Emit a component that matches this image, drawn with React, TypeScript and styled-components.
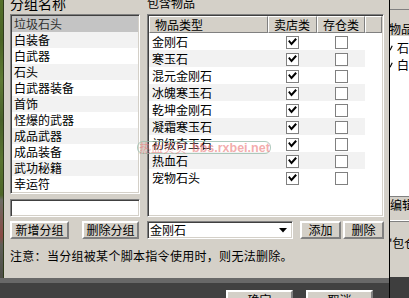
import React from "react";
import styled, { createGlobalStyle, css } from "styled-components";

const FONT = `"Noto Sans CJK SC", "Noto Sans CJK JP", "DejaVu Sans", sans-serif`;

const GlobalStyle = createGlobalStyle`
  html, body { margin: 0; padding: 0; background: #404040; }
  #root { width: 409px; height: 298px; }
`;

const Screen = styled.div`
  position: relative;
  display: flex;
  width: 409px;
  height: 298px;
  overflow: hidden;
  font-family: ${FONT};
  font-size: 12px;
  color: #000;
  background: #404040;
`;

const MainColumn = styled.div`
  display: flex;
  flex-direction: column;
  width: 389px;
  flex: none;
`;

const TopArea = styled.div`
  display: flex;
  height: 278px;
  flex: none;
`;

const GameEdge = styled.div`
  width: 4px;
  flex: none;
  box-sizing: border-box;
  border-right: 1px solid #2f3b1c;
  background: linear-gradient(
    to bottom,
    #55702c 0px,
    #4a6424 40px,
    #5e7a34 80px,
    #48612a 120px,
    #5a7430 160px,
    #4d6627 195px,
    #6c6c64 200px,
    #8a4a44 236px,
    #5e5e58 245px,
    #4e4e48 278px
  );
`;

const Panel = styled.div`
  flex: 1;
  min-width: 0;
  display: flex;
  flex-direction: column;
  background: #d4d0c8;
  padding: 0 5px 0 6px;
`;

const Columns = styled.div`
  display: flex;
  gap: 7px;
`;

const Column = styled.div<{ $width?: number }>`
  display: flex;
  flex-direction: column;
  width: ${(p) => (p.$width ? `${p.$width}px` : "auto")};
  flex: ${(p) => (p.$width ? "none" : "1")};
  min-width: 0;
`;

const GroupLabel = styled.div<{ $size: number }>`
  height: 14px;
  margin-top: -4px;
  margin-bottom: 4px;
  line-height: 14px;
  font-size: ${(p) => p.$size}px;
  white-space: nowrap;
`;

const sunken = css`
  box-sizing: border-box;
  border: 1px solid;
  border-color: #808080 #ffffff #ffffff #808080;
  padding: 1px;
  box-shadow: inset 1px 1px 0 #404040, inset -1px -1px 0 #d4d0c8;
  background: #ffffff;
`;

const raised = css`
  box-sizing: border-box;
  border: 2px solid;
  border-color: #ffffff #808080 #808080 #ffffff;
  background: #d4d0c8;
`;

const ListBox = styled.div`
  ${sunken};
  height: 180px;
  overflow: hidden;
`;

const ListRow = styled.div<{ $selected?: boolean; $odd?: boolean }>`
  height: 16px;
  line-height: 16px;
  padding-left: 2px;
  white-space: nowrap;
  background: ${(p) => (p.$selected ? "#c4c4c4" : p.$odd ? "#f2f2f2" : "#ffffff")};
  color: ${(p) => (p.$selected ? "#303030" : "#000000")};
`;

const TextInput = styled.div`
  ${sunken};
  height: 18px;
  margin-top: 5px;
`;

const ButtonRow = styled.div<{ $gap: number }>`
  display: flex;
  gap: ${(p) => p.$gap}px;
  margin-top: 4px;
  height: 18px;
`;

const Button = styled.div<{ $width: number }>`
  ${raised};
  width: ${(p) => p.$width}px;
  height: 18px;
  display: flex;
  align-items: center;
  justify-content: center;
  line-height: 14px;
  white-space: nowrap;
`;

const TableBox = styled.div`
  ${sunken};
  height: 203px;
  display: flex;
  flex-direction: column;
  overflow: hidden;
`;

const HeaderRow = styled.div`
  display: flex;
  height: 17px;
  flex: none;
`;

const HeaderCell = styled.div<{ $width?: number }>`
  box-sizing: border-box;
  ${(p) => (p.$width ? `width: ${p.$width}px; flex: none;` : "flex: 1;")}
  height: 17px;
  border: 1px solid;
  border-color: #ffffff #808080 #808080 #ffffff;
  background: #d4d0c8;
  padding-left: 5px;
  line-height: 15px;
  white-space: nowrap;
`;

const ItemRow = styled.div<{ $odd?: boolean }>`
  display: flex;
  width: 216px;
  height: 17px;
  flex: none;
  background: ${(p) => (p.$odd ? "#f2f2f2" : "#ffffff")};
`;

const ItemName = styled.div`
  width: 119px;
  flex: none;
  box-sizing: border-box;
  padding-left: 3px;
  line-height: 17px;
  white-space: nowrap;
`;

const CheckCell = styled.div<{ $width: number }>`
  width: ${(p) => p.$width}px;
  flex: none;
  display: flex;
  align-items: center;
  justify-content: center;
  padding-top: 1px;
  box-sizing: border-box;
`;

const CheckBox = styled.div`
  box-sizing: border-box;
  width: 13px;
  height: 13px;
  border: 1px solid #808080;
  background: #ffffff;
  display: flex;
`;

const SelectBox = styled.div`
  ${sunken};
  width: 146px;
  height: 18px;
  margin-right: 5px;
  display: flex;
  align-items: center;
  justify-content: space-between;
  padding: 0 5px 0 2px;
  line-height: 14px;
`;

const Notice = styled.div`
  margin-top: 9px;
  line-height: 16px;
  letter-spacing: 0.3px;
  white-space: nowrap;
`;

const BottomBar = styled.div`
  flex: 1;
  display: flex;
  justify-content: flex-end;
  gap: 13px;
  padding-right: 16px;
  border-top: 5px solid #686868;
  background: #414141;
  overflow: hidden;
`;

const DialogButton = styled.div`
  ${raised};
  width: 67px;
  height: 22px;
  margin-top: 7px;
  flex: none;
  display: flex;
  justify-content: center;
  padding-top: 1px;
  line-height: 14px;
`;

const SideColumn = styled.div`
  flex: 1;
  display: flex;
  flex-direction: column;
  box-sizing: border-box;
  border-left: 1px solid #000000;
  background: #d4d0c8;
  overflow: hidden;
`;

const SideTop = styled.div`
  height: 9px;
  border-bottom: 1px solid #808080;
  flex: none;
`;

const SideHeader = styled.div`
  margin-top: 11px;
  height: 15px;
  line-height: 15px;
  margin-left: -1px;
  white-space: nowrap;
  flex: none;
`;

const SideList = styled.div`
  height: 160px;
  flex: none;
  background: #ffffff;
  padding-top: 3px;
  box-sizing: border-box;
`;

const SideRow = styled.div`
  display: flex;
  align-items: center;
  gap: 4px;
  height: 17px;
  white-space: nowrap;
`;

const SideTab = styled.div`
  height: 26px;
  flex: none;
  box-sizing: border-box;
  border-top: 1px solid #808080;
  border-bottom: 1px solid #808080;
  box-shadow: inset 0 -1px 0 #ffffff;
  line-height: 15px;
  white-space: nowrap;
`;

const SideText = styled.div`
  margin-top: 14px;
  line-height: 14px;
  white-space: nowrap;
  margin-left: -1px;
`;

const SideDark = styled.div`
  margin-top: auto;
  height: 21px;
  flex: none;
  background: #3e3e3e;
`;

const Watermark = styled.div`
  position: absolute;
  left: 137px;
  top: 141px;
  width: 134px;
  height: 13px;
  box-sizing: border-box;
  border: 1px solid rgba(150, 185, 170, 0.75);
  border-radius: 6px;
  display: flex;
  align-items: center;
  gap: 5px;
  padding-left: 1px;
  color: rgba(235, 120, 120, 0.62);
  font-size: 12px;
  line-height: 12px;
  white-space: nowrap;
  pointer-events: none;
`;

const WatermarkUrl = styled.span`
  font-family: "Liberation Sans", Arial, sans-serif;
  font-size: 12.5px;
  font-weight: bold;
`;

const Check = () => (
  <svg width="11" height="11" viewBox="0 0 11 11">
    <polyline points="2.5,4.5 4.5,7 8.5,2.5" fill="none" stroke="#000" strokeWidth="2" strokeLinecap="square" />
  </svg>
);

const Arrow = () => (
  <svg width="8" height="5" viewBox="0 0 8 5">
    <polygon points="0,0 8,0 4,4.5" fill="#000" />
  </svg>
);

const MiniCheck = () => (
  <svg width="4" height="10" viewBox="0 0 4 10">
    <polyline points="0,8 3,2" fill="none" stroke="#000" strokeWidth="1.6" />
  </svg>
);

const groups = ["垃圾石头", "白装备", "白武器", "石头", "白武器装备", "首饰", "怪爆的武器", "成品武器", "成品装备", "武功秘籍", "幸运符"];
const items = ["金刚石", "寒玉石", "混元金刚石", "冰魄寒玉石", "乾坤金刚石", "凝霜寒玉石", "初级奇玉石", "热血石", "宠物石头"];

export default function App() {
  return (
    <>
      <GlobalStyle />
      <Screen>
        <MainColumn>
          <TopArea>
            <GameEdge />
            <Panel>
              <Columns>
                <Column $width={130}>
                  <GroupLabel $size={14}>分组名称</GroupLabel>
                  <ListBox>
                    {groups.map((g, i) => (
                      <ListRow key={g} $selected={i === 0} $odd={i % 2 === 1}>
                        {g}
                      </ListRow>
                    ))}
                  </ListBox>
                  <TextInput />
                  <ButtonRow $gap={13}>
                    <Button $width={59}>新增分组</Button>
                    <Button $width={57}>删除分组</Button>
                  </ButtonRow>
                </Column>
                <Column>
                  <GroupLabel $size={12}>包含物品</GroupLabel>
                  <TableBox>
                    <HeaderRow>
                      <HeaderCell $width={119}>物品类型</HeaderCell>
                      <HeaderCell $width={49}>卖店类</HeaderCell>
                      <HeaderCell $width={48}>存仓类</HeaderCell>
                      <HeaderCell />
                    </HeaderRow>
                    {items.map((it, i) => (
                      <ItemRow key={it} $odd={i % 2 === 1}>
                        <ItemName>{it}</ItemName>
                        <CheckCell $width={49}>
                          <CheckBox>
                            <Check />
                          </CheckBox>
                        </CheckCell>
                        <CheckCell $width={48}>
                          <CheckBox />
                        </CheckCell>
                      </ItemRow>
                    ))}
                  </TableBox>
                  <ButtonRow $gap={2}>
                    <SelectBox>
                      <span>金刚石</span>
                      <Arrow />
                    </SelectBox>
                    <Button $width={41}>添加</Button>
                    <Button $width={41}>删除</Button>
                  </ButtonRow>
                </Column>
              </Columns>
              <Notice>注意：当分组被某个脚本指令使用时，则无法删除。</Notice>
            </Panel>
          </TopArea>
          <BottomBar>
            <DialogButton>确定</DialogButton>
            <DialogButton>取消</DialogButton>
          </BottomBar>
        </MainColumn>
        <SideColumn>
          <SideTop />
          <SideHeader>物品</SideHeader>
          <SideList>
            <SideRow>
              <MiniCheck />
              <span>石</span>
            </SideRow>
            <SideRow>
              <MiniCheck />
              <span>白</span>
            </SideRow>
          </SideList>
          <SideTab>编辑</SideTab>
          <SideText>'包仓</SideText>
          <SideDark />
        </SideColumn>
        <Watermark>
          <span>热血贝贝</span>
          <WatermarkUrl>bbs.rxbei.net</WatermarkUrl>
        </Watermark>
      </Screen>
    </>
  );
}
